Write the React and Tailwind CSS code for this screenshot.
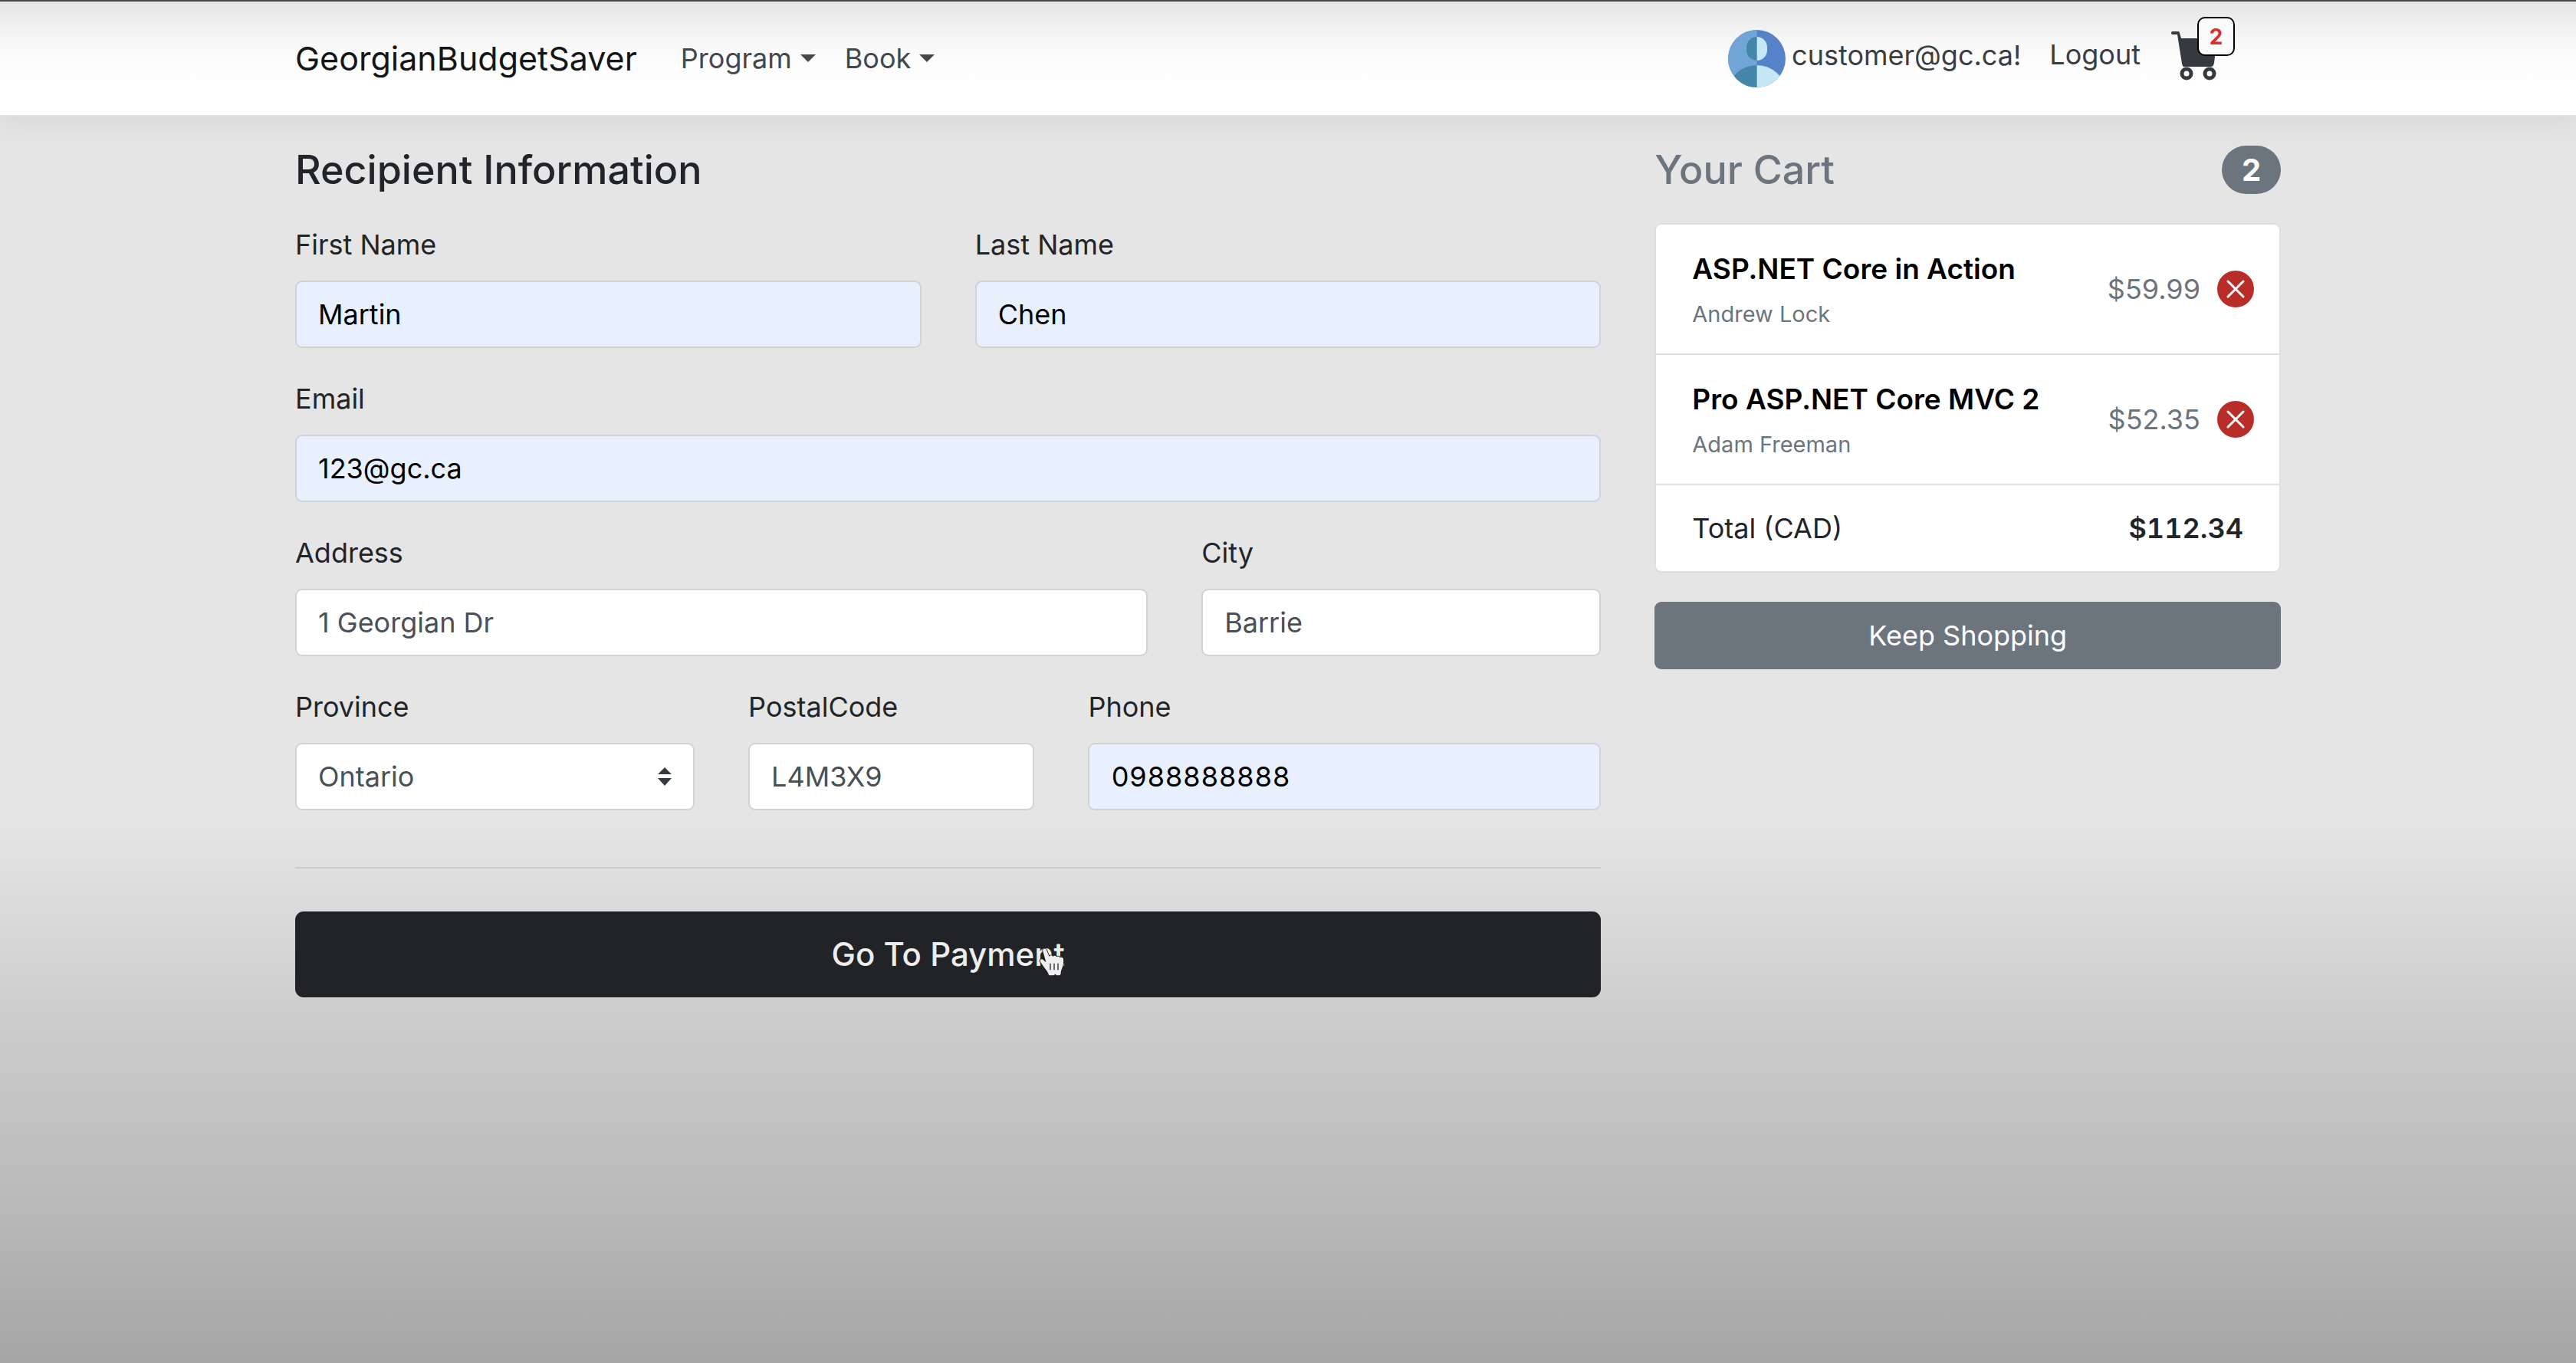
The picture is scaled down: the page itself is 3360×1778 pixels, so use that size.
import React from "react";

function Caret() {
  return (
    <svg viewBox="0 0 20 10" className="h-[10px] w-[20px]" aria-hidden="true">
      <path d="M0 0h20L10 10z" fill="currentColor" />
    </svg>
  );
}

function Avatar() {
  return (
    <svg viewBox="0 0 75 75" className="size-[75px] shrink-0" aria-hidden="true">
      <defs>
        <clipPath id="disc"><circle cx="37.5" cy="37.5" r="37.5" /></clipPath>
        <clipPath id="leftHalf"><path d="M0 0h37.5v75H0z" /></clipPath>
      </defs>
      <g clipPath="url(#disc)">
        <path d="M0 0h75v75H0z" fill="#5682c9" />
        <g fill="#c5e8f9">
          <rect x="24" y="9" width="27" height="31" rx="13.5" />
          <ellipse cx="37.5" cy="83" rx="38" ry="37" />
        </g>
        <g clipPath="url(#leftHalf)">
          <path d="M0 0h75v75H0z" fill="#71a5d8" />
          <g fill="#4486a7">
            <rect x="24" y="9" width="27" height="31" rx="13.5" />
            <ellipse cx="37.5" cy="83" rx="38" ry="37" />
          </g>
        </g>
      </g>
    </svg>
  );
}

function CartIcon() {
  return (
    <svg viewBox="0 0 61 64" className="h-[64px] w-[61px]" aria-hidden="true">
      <path d="M1 0h8q2 0 2 2l2 7h47l-4 32q-1 5-4 5H16q-1 0-2-4L8 4H1q-2-2 0-4z" fill="#343a40" />
      <g fill="none" stroke="#343a40" strokeWidth="5">
        <circle cx="20" cy="55" r="6" />
        <circle cx="50" cy="55" r="6" />
      </g>
    </svg>
  );
}

function Pointer() {
  return (
    <svg viewBox="70 75 111 120" className="h-[40px] w-[37px]" aria-hidden="true">
      <path
        d="M94 84c5-3 10-1 12 4l11 26c2-7 12-7 14 0 3-5 12-5 14 1 4-4 12-3 13 3 5-3 13-1 14 5 1 14 0 25-5 36-3 7-5 12-5 20-1 6-2 8-8 8h-8l-6-5-5 5h-14c-7 0-7-4-9-9-3-8-9-14-15-22l-15-22c-4-8 4-13 10-9l12 11-11-40c-2-5-3-9 1-12z"
        fill="#efefef" stroke="#18191b" strokeWidth="5" strokeLinejoin="round" paintOrder="stroke"
      />
      <path d="M121 140v26M136 140v26M151 140v26" stroke="#2a2b2d" strokeWidth="4" />
    </svg>
  );
}

const inputBase =
  "block h-[88px] w-full rounded-[9px] border-2 border-[#ced4da] px-[28px] text-[36px] leading-[56px] outline-none";

function Field({ id, label, value, span, filled, type = "text" }) {
  return (
    <div className={span}>
      <label htmlFor={id} className="mb-[19px] block">{label}</label>
      <input
        id={id}
        type={type}
        defaultValue={value}
        className={`${inputBase} ${filled ? "bg-[#e8f0fe] text-black" : "bg-white text-[#495057]"} ${type === "tel" ? "tabular-nums" : ""}`}
      />
    </div>
  );
}

function CartItem({ title, author, price }) {
  return (
    <li className="flex h-[170px] items-center justify-between border-b-2 border-[#dfdfdf] pr-[33px] pl-[47px]">
      <div className="pt-[6px]">
        <h6 className="text-[37px] leading-[44px] font-semibold text-black">{title}</h6>
        <p className="mt-[15px] text-[29px] leading-[44px] text-[#6c757d]">{author}</p>
      </div>
      <div className="flex items-center gap-[22px]">
        <span className="text-[#6c757d]">{price}</span>
        <button type="button" aria-label={`Remove ${title}`} className="size-[48px]">
          <svg viewBox="0 0 48 48" className="size-[48px]" aria-hidden="true">
            <circle cx="24" cy="24" r="24" fill="#b92d28" />
            <path d="M14 14l20 20M34 14L14 34" stroke="#fff" strokeWidth="3" strokeLinecap="round" />
          </svg>
        </button>
      </div>
    </li>
  );
}

export default function App() {
  return (
    <div className="flex min-h-screen flex-col border-t-2 border-[#4a484b] bg-[linear-gradient(to_bottom,#e5e5e5_0%,#e5e5e5_60%,#dadada_67%,#cfcfcf_73%,#b8b8b8_89%,#a5a5a5_100%)] font-['Inter','Liberation_Sans',sans-serif] text-[36px] leading-[56px] text-[#212529]">
      <header className="border-b-2 border-[#dee2e6] bg-[linear-gradient(to_bottom,#e5e5e5,#f5f5f5_30%,#fcfcfc_50%,#ffffff_75%)] shadow-[0_6px_40px_rgba(0,0,0,0.07)]">
        <div className="mx-auto flex h-[148px] w-full max-w-[2660px] items-center justify-between px-[35px]">
          <nav className="flex items-center">
            <a href="#home" className="mr-[57px] text-[43px] text-[#151617]">GeorgianBudgetSaver</a>
            <button type="button" className="mr-[38px] flex items-center gap-[11px] text-[#45484b]">
              Program <Caret />
            </button>
            <button type="button" className="flex items-center gap-[11px] text-[#45484b]">
              Book <Caret />
            </button>
          </nav>
          <div className="mr-[82px] flex items-center text-[#3b3e41]">
            <Avatar />
            <a href="#account" className="ml-[8px] pb-[8px]">customer@gc.ca!</a>
            <a href="#logout" className="ml-[37px] pb-[10px]">Logout</a>
            <a href="#cart" aria-label="Cart, 2 items" className="relative ml-[40px] block pb-[6px]">
              <CartIcon />
              <span className="absolute -top-[19px] left-[34px] flex h-[51px] w-[49px] items-center justify-center rounded-[10px] border-2 border-black bg-[#fafafa] text-[28px] leading-[32px] font-bold text-[#d9302c]">2</span>
            </a>
          </div>
        </div>
      </header>

      <main className="mx-auto grid w-full max-w-[2660px] grid-cols-12 items-start gap-x-[70px] px-[35px] pt-[36px]">
        <form className="col-span-8" onSubmit={(e) => e.preventDefault()}>
          <h4 className="mb-[36px] text-[52px] leading-[67px] font-medium">Recipient Information</h4>
          <div className="grid grid-cols-12 gap-x-[70px] gap-y-[38px]">
            <Field id="first" label="First Name" value="Martin" span="col-span-6" filled />
            <Field id="last" label="Last Name" value="Chen" span="col-span-6" filled />
            <Field id="email" label="Email" value="123@gc.ca" span="col-span-12" type="email" filled />
            <Field id="address" label="Address" value="1 Georgian Dr" span="col-span-8" />
            <Field id="city" label="City" value="Barrie" span="col-span-4" />
            <div className="col-span-4">
              <label htmlFor="province" className="mb-[19px] block">Province</label>
              <div className="relative">
                <select id="province" defaultValue="Ontario" className={`${inputBase} appearance-none bg-white text-[#495057]`}>
                  <option>Ontario</option>
                </select>
                <svg viewBox="0 0 18 24" className="pointer-events-none absolute top-[32px] right-[30px] h-[24px] w-[18px]" aria-hidden="true">
                  <path d="M0 9L9 0l9 9zM0 14h18l-9 10z" fill="#343a40" />
                </svg>
              </div>
            </div>
            <Field id="postal" label="PostalCode" value="L4M3X9" span="col-span-3" />
            <Field id="phone" label="Phone" value="0988888888" span="col-span-5" type="tel" filled />
          </div>
          <hr className="mt-[74px] mb-[56px] border-t-2 border-[#cccccc]" />
          <button type="submit" className="relative block h-[112px] w-full rounded-[11px] bg-[#222326] text-[42px] font-medium text-[#ededed]">
            Go To Payment
            <span className="absolute top-[46px] left-[968px]"><Pointer /></span>
          </button>
        </form>

        <aside className="col-span-4">
          <h4 className="mb-[36px] flex items-center justify-between text-[52px] leading-[67px] font-medium text-[#6c757d]">
            Your Cart
            <span className="flex h-[63px] w-[77px] items-center justify-center rounded-full bg-[#6c757d] text-[40px] leading-[40px] font-bold text-white">2</span>
          </h4>
          <ul className="mb-[38px] overflow-hidden rounded-[9px] border-2 border-[#dfdfdf] bg-white">
            <CartItem title="ASP.NET Core in Action" author="Andrew Lock" price="$59.99" />
            <CartItem title="Pro ASP.NET Core MVC 2" author="Adam Freeman" price="$52.35" />
            <li className="flex h-[112px] items-center justify-between px-[47px]">
              <span>Total (CAD)</span>
              <strong className="font-semibold tabular-nums">$112.34</strong>
            </li>
          </ul>
          <a href="#shop" className="flex h-[88px] w-full items-center justify-center rounded-[9px] bg-[#6c757d] text-white">Keep Shopping</a>
        </aside>
      </main>
    </div>
  );
}
